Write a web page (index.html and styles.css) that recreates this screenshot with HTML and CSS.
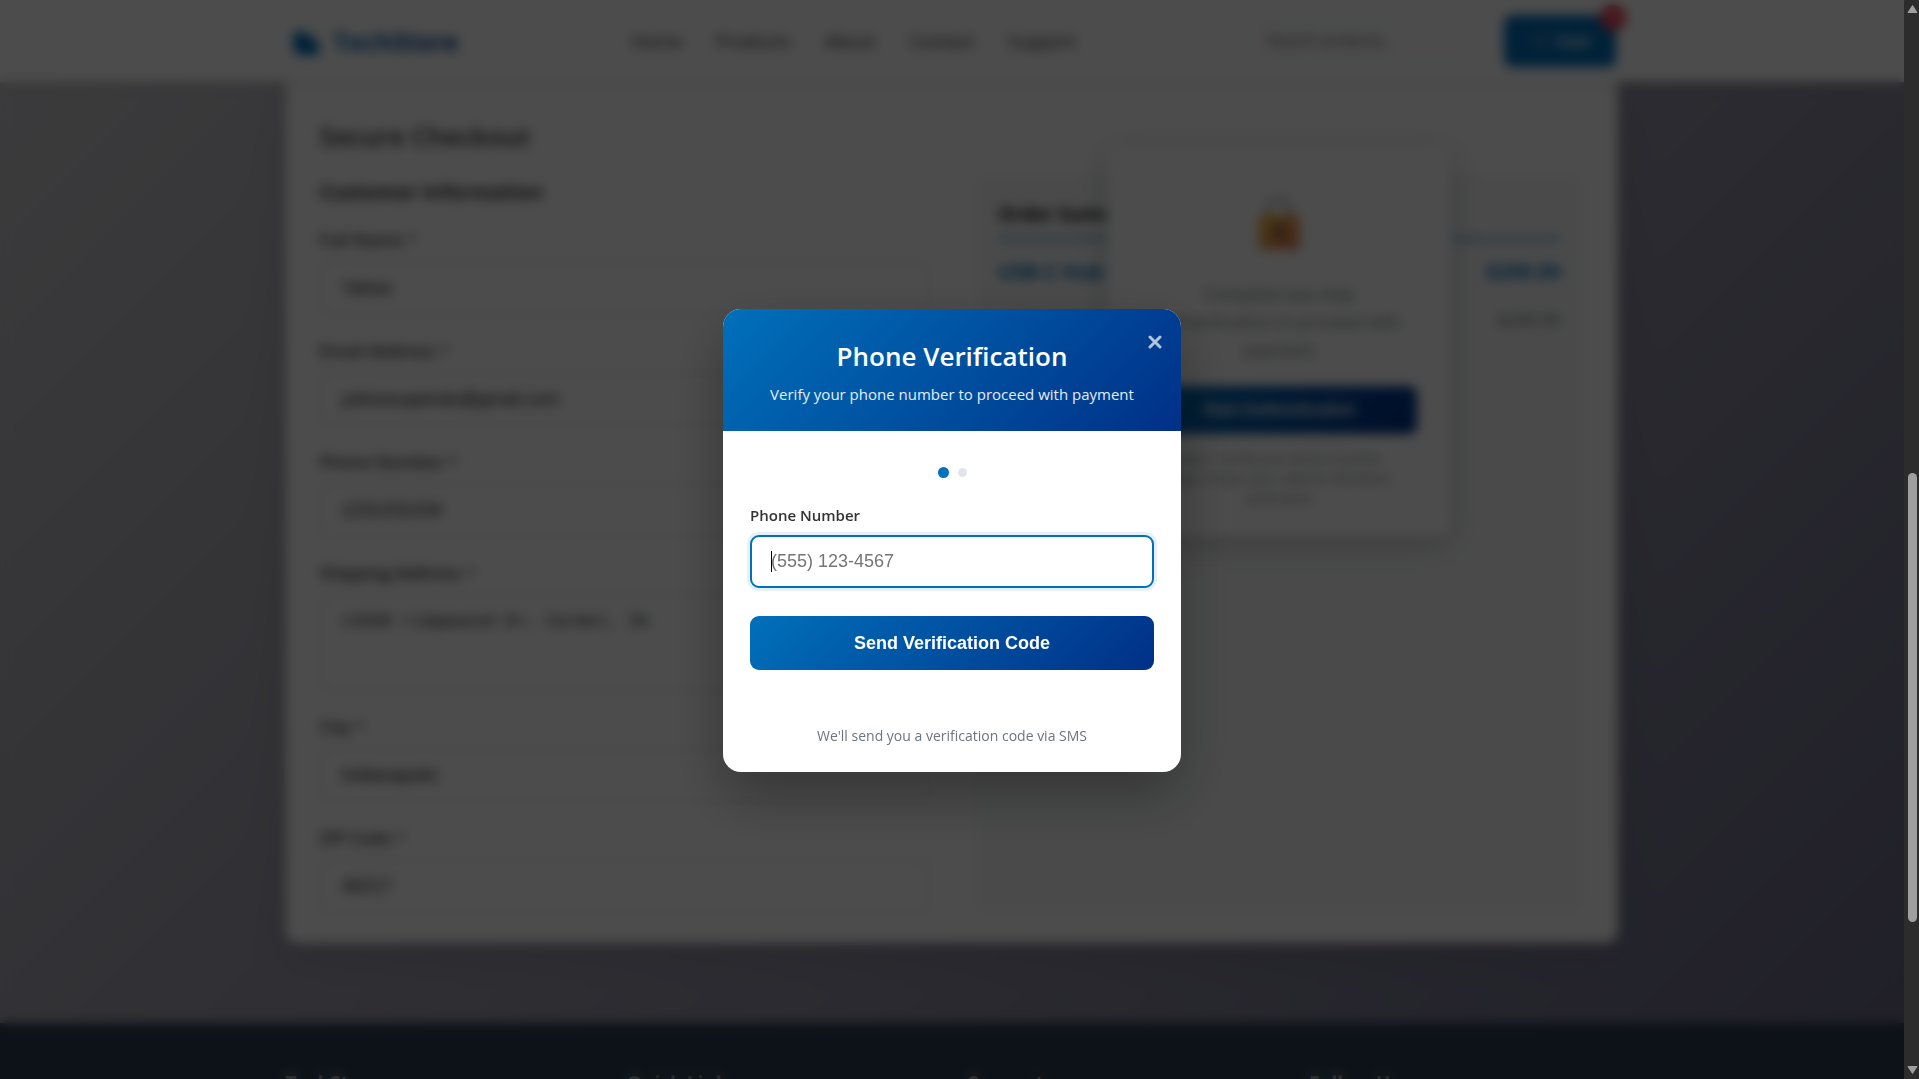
FILE: index.html
```html
<!DOCTYPE html>
<html lang="en">
<head>
    <meta charset="UTF-8">
    <meta name="viewport" content="width=device-width, initial-scale=1.0">
    <title>TechStore - Secure Checkout</title>
    <link rel="stylesheet" href="styles.css">
</head>

<body>
    <div class="page">
        <header class="header">
            <div class="header-content">
                <a href="#" class="logo">
                    <svg class="logo-icon" viewBox="0 0 32 32" aria-hidden="true">
                        <path d="M4 7 h13 l4 6 h2 q6 2 6 8 v5 q0 4 -4 4 H11 q-8 -2 -8 -10 z" fill="#0070ba"/>
                    </svg>
                    <span>TechStore</span>
                </a>
                <nav class="nav">
                    <a href="#">Home</a>
                    <a href="#">Products</a>
                    <a href="#">About</a>
                    <a href="#">Contact</a>
                    <a href="#">Support</a>
                </nav>
                <div class="header-actions">
                    <input type="text" class="search" placeholder="Search products..." aria-label="Search products">
                    <button class="cart">&#128722; Cart<span class="cart-count">1</span></button>
                </div>
            </div>
        </header>

        <main class="main">
            <section class="checkout">
                <h2 class="checkout-title">Secure Checkout</h2>
                <div class="checkout-grid">
                    <form class="customer">
                        <h3>Customer Information</h3>
                        <div class="form-group">
                            <label for="name">Full Name <span>*</span></label>
                            <input type="text" id="name" value="Yahoo">
                        </div>
                        <div class="form-group">
                            <label for="email">Email Address <span>*</span></label>
                            <input type="email" id="email" value="yahoosupendu@gmail.com">
                        </div>
                        <div class="form-group">
                            <label for="phone">Phone Number <span>*</span></label>
                            <input type="tel" id="phone" value="1231231234">
                        </div>
                        <div class="form-group">
                            <label for="address">Shipping Address <span>*</span></label>
                            <textarea id="address">14506 ridgewood Dr, Carmel, IN</textarea>
                        </div>
                        <div class="form-group">
                            <label for="city">City <span>*</span></label>
                            <input type="text" id="city" value="Indianapolis">
                        </div>
                        <div class="form-group">
                            <label for="zip">ZIP Code <span>*</span></label>
                            <input type="text" id="zip" value="46217">
                        </div>
                    </form>

                    <aside class="summary">
                        <h3>Order Summary</h3>
                        <div class="summary-total"><span>USB-C Hub</span><span>$299.99</span></div>
                        <div class="summary-line"><span>Subtotal</span><span>$299.99</span></div>

                        <div class="auth-card">
                            <svg class="lock" viewBox="0 0 48 62" aria-hidden="true">
                                <path d="M13 28 V15 a11 11 0 0 1 22 0 V28" fill="none" stroke="#b4b4ba" stroke-width="4"/>
                                <rect x="2" y="22" width="44" height="38" rx="4" fill="url(#brass)"/>
                                <circle cx="24" cy="36" r="4" fill="#5a4658"/>
                                <path d="M22 38 h4 l2 10 h-8 z" fill="#5a4658"/>
                                <defs>
                                    <linearGradient id="brass" x1="0" y1="0" x2="1" y2="1">
                                        <stop offset="0" stop-color="#f9c23c"/>
                                        <stop offset="1" stop-color="#e07256"/>
                                    </linearGradient>
                                </defs>
                            </svg>
                            <p class="auth-text">Complete two-step authentication to proceed with payment</p>
                            <button class="auth-button">Start Authentication</button>
                            <p class="auth-note">Step 1: Verify your phone number<br>Step 2: Enter your code for biometric verification</p>
                        </div>
                    </aside>
                </div>
            </section>
        </main>

        <footer class="footer">
            <div class="footer-content">
                <h3>TechStore</h3>
                <h3>Quick Links</h3>
                <h3>Support</h3>
                <h3>Follow Us</h3>
            </div>
        </footer>

        <div class="overlay">
            <div class="modal" role="dialog" aria-labelledby="modal-title">
                <div class="modal-header">
                    <button class="close" aria-label="Close">
                        <svg viewBox="0 0 14 14" aria-hidden="true"><path d="M2 2 L12 12 M12 2 L2 12"/></svg>
                    </button>
                    <h2 id="modal-title">Phone Verification</h2>
                    <p>Verify your phone number to proceed with payment</p>
                </div>
                <div class="modal-body">
                    <div class="steps">
                        <span class="step active"></span>
                        <span class="step"></span>
                    </div>
                    <label for="verify-phone">Phone Number</label>
                    <div class="phone-field">
                        <input type="tel" id="verify-phone" placeholder="(555) 123-4567">
                        <span class="caret"></span>
                    </div>
                    <button class="send">Send Verification Code</button>
                    <p class="hint">We'll send you a verification code via SMS</p>
                </div>
            </div>
        </div>
    </div>

    <div class="scrollbar">
        <svg viewBox="0 0 15 15" aria-hidden="true"><path d="M8.500 5.500 L13 12.500 H4 Z"/></svg>
        <div class="thumb"></div>
        <svg class="arrow-down" viewBox="0 0 15 15" aria-hidden="true"><path d="M8.500 9.500 L13 2.500 H4 Z"/></svg>
    </div>
</body>
</html>
```

FILE: styles.css
```css
* {
    box-sizing: border-box;
    margin: 0;
    padding: 0;
}

body {
    display: flex;
    height: 100vh;
    overflow: hidden;
    font-family: "Open Sans", "Noto Sans", sans-serif;
    font-size: 16px;
    color: #333;
    background: #2c2c2c;
}

.page {
    position: relative;
    flex: 1;
    display: flex;
    flex-direction: column;
    height: 100vh;
    overflow: hidden;
    background: linear-gradient(135deg, #c8c8cb, #6c6a88);
}

/* Header */
.header {
    position: relative;
    z-index: 1;
    background: #fff;
    box-shadow: 0 2px 10px rgba(0, 0, 0, 0.1);
}

.header-content {
    display: flex;
    align-items: center;
    justify-content: space-between;
    width: 70%;
    height: 82px;
    margin: 0 auto;
    padding: 0 2px 0 4px;
}

.logo {
    display: flex;
    align-items: center;
    gap: 12px;
    font-size: 25px;
    font-weight: 700;
    text-decoration: none;
}

.logo span {
    background: linear-gradient(135deg, #0070ba, #003087);
    -webkit-background-clip: text;
    background-clip: text;
    color: transparent;
}

.logo-icon {
    width: 32px;
    height: 32px;
}

.nav {
    display: flex;
    gap: 34px;
}

.nav a {
    color: #333;
    font-size: 18px;
    font-weight: 500;
    text-decoration: none;
}

.header-actions {
    display: flex;
    align-items: center;
    gap: 24px;
}

.search {
    width: 232px;
    height: 44px;
    padding: 0 16px;
    border: 2px solid #eceff2;
    border-radius: 24px;
    font-family: "Liberation Sans", Arial, sans-serif;
    font-size: 16px;
}

.cart {
    position: relative;
    width: 112px;
    height: 52px;
    border: none;
    border-radius: 8px;
    background: #0070ba;
    color: #fff;
    font-family: "Liberation Sans", Arial, sans-serif;
    font-size: 17px;
    font-weight: 600;
}

.cart-count {
    position: absolute;
    top: -10px;
    right: -10px;
    width: 26px;
    height: 26px;
    border-radius: 50%;
    background: #e8384f;
    font-size: 13px;
    line-height: 26px;
}

/* Checkout */
.main {
    width: 70%;
    margin: 0 auto 80px;
}

.checkout {
    padding: 30px 34px;
    border-radius: 0 0 12px 12px;
    background: #fff;
    box-shadow: 0 10px 40px rgba(0, 0, 0, 0.1);
}

.checkout-title {
    margin-bottom: 16px;
    font-size: 26px;
    font-weight: 600;
    line-height: 48px;
}

.checkout-grid {
    display: grid;
    grid-template-columns: 1fr 1fr;
    gap: 44px;
}

.customer h3 {
    margin-bottom: 20px;
    font-size: 20px;
    line-height: 32px;
}

.form-group {
    margin-bottom: 24px;
}

.form-group:last-child {
    margin-bottom: 0;
}

.form-group label {
    display: block;
    margin-bottom: 9px;
    font-size: 17px;
    font-weight: 600;
    line-height: 24px;
}

.form-group label span {
    font-weight: 400;
}

.form-group input,
.form-group textarea {
    display: block;
    width: 100%;
    height: 54px;
    padding: 14px 20px;
    border: 2px solid #e1e5e9;
    border-radius: 8px;
    color: #222;
    font-family: "Liberation Sans", Arial, sans-serif;
    font-size: 18px;
    resize: none;
}

.form-group textarea {
    height: 97px;
    padding: 16px 20px;
    font-family: "Liberation Mono", monospace;
    font-size: 17px;
}

.summary {
    position: relative;
    margin-top: -2px;
    padding: 24px;
    border-radius: 12px;
    background: #f8f9fa;
}

.summary h3 {
    padding-bottom: 8px;
    border-bottom: 2px solid #0070ba;
    color: #111;
    font-size: 19px;
    line-height: 32px;
}

.summary-total,
.summary-line {
    display: flex;
    justify-content: space-between;
    padding: 16px 0;
    color: #0070ba;
    font-size: 20px;
    font-weight: 700;
    line-height: 32px;
}

.summary-line {
    padding: 0;
    color: #666;
    font-size: 17px;
    font-weight: 400;
}

/* Card that covers the summary until the buyer is verified */
.auth-card {
    position: absolute;
    top: -28px;
    left: 50%;
    width: 344px;
    padding: 46px 34px 28px;
    border-radius: 12px;
    background: #fff;
    box-shadow: 0 8px 32px rgba(0, 0, 0, 0.2);
    text-align: center;
    transform: translateX(-50%);
}

.lock {
    display: block;
    width: 44px;
    height: 62px;
    margin: 0 auto;
}

.auth-text {
    margin: 26px 0 22px;
    padding: 0 8px;
    color: #6c757d;
    font-size: 17px;
    line-height: 28px;
}

.auth-button {
    width: 100%;
    height: 48px;
    border: none;
    border-radius: 8px;
    background: linear-gradient(135deg, #0070ba, #003087);
    color: #fff;
    font-family: "Liberation Sans", Arial, sans-serif;
    font-size: 16px;
    font-weight: 600;
}

.auth-note {
    margin-top: 14px;
    color: #6c757d;
    font-size: 13px;
    line-height: 20px;
}

/* Footer */
.footer {
    flex: 1;
    padding-top: 46px;
    background: #2c3e50;
    color: #fff;
}

.footer-content {
    display: grid;
    grid-template-columns: repeat(4, 1fr);
    gap: 32px;
    width: 70%;
    margin: 0 auto;
}

.footer h3 {
    font-size: 19px;
    line-height: 28px;
}

/* Verification modal */
.overlay {
    position: absolute;
    inset: 0;
    z-index: 10;
    display: flex;
    align-items: center;
    justify-content: center;
    padding-top: 2px;
    background: rgba(0, 0, 0, 0.7);
    backdrop-filter: blur(6px);
}

.modal {
    width: 458px;
    border-radius: 18px;
    background: #fff;
    box-shadow: 0 24px 56px rgba(0, 0, 0, 0.3);
    overflow: hidden;
}

.modal-header {
    position: relative;
    padding: 28px 24px 25px;
    background: linear-gradient(135deg, #0070ba, #003087);
    color: #fff;
    text-align: center;
}

.modal-header h2 {
    margin-bottom: 7px;
    font-size: 26px;
    font-weight: 600;
    line-height: 38px;
}

.modal-header p {
    font-size: 15px;
    line-height: 24px;
    opacity: 0.9;
}

.close {
    position: absolute;
    top: 16px;
    right: 9px;
    width: 34px;
    height: 34px;
    border: none;
    background: none;
    cursor: pointer;
}

.close svg {
    display: block;
    width: 14px;
    height: 14px;
    margin: 0 auto;
    fill: none;
    stroke: #fff;
    stroke-width: 3;
    stroke-linecap: round;
    opacity: 0.7;
}

.modal-body {
    padding: 35px 27px 24px;
}

.steps {
    display: flex;
    align-items: center;
    justify-content: center;
    gap: 9px;
    height: 12px;
    margin-bottom: 26px;
}

.step {
    width: 9px;
    height: 9px;
    border-radius: 50%;
    background: #e1e5e9;
}

.step.active {
    width: 11px;
    height: 11px;
    background: #0070ba;
}

.modal-body label {
    display: block;
    margin-bottom: 9px;
    font-size: 15px;
    font-weight: 600;
    line-height: 22px;
}

.phone-field {
    position: relative;
    margin-bottom: 28px;
}

.phone-field input {
    display: block;
    width: 100%;
    height: 53px;
    padding: 0 19px;
    border: 2px solid #0070ba;
    border-radius: 9px;
    outline: none;
    box-shadow: 0 0 0 3px rgba(0, 112, 186, 0.1);
    font-family: "Liberation Sans", Arial, sans-serif;
    font-size: 18px;
}

.caret {
    position: absolute;
    top: 16px;
    left: 21px;
    width: 1px;
    height: 21px;
    background: #000;
}

.send {
    width: 100%;
    height: 54px;
    border: none;
    border-radius: 9px;
    background: linear-gradient(135deg, #0070ba, #003087);
    color: #fff;
    font-family: "Liberation Sans", Arial, sans-serif;
    font-size: 18px;
    font-weight: 600;
    cursor: pointer;
}

.hint {
    margin-top: 54px;
    color: #6c757d;
    font-size: 14px;
    line-height: 24px;
    text-align: center;
}

/* Scrollbar strip */
.scrollbar {
    display: grid;
    grid-template-rows: 15px 458fr 449fr 142fr 15px;
    width: 15px;
    background: #2c2c2c;
}

.scrollbar svg {
    width: 15px;
    height: 15px;
    fill: #9f9f9f;
    stroke: #9f9f9f;
    stroke-linejoin: round;
}

.thumb {
    grid-row: 3;
    width: 9px;
    margin-left: 4px;
    border-radius: 5px;
    background: #9f9f9f;
}

.arrow-down {
    grid-row: 5;
}
```
